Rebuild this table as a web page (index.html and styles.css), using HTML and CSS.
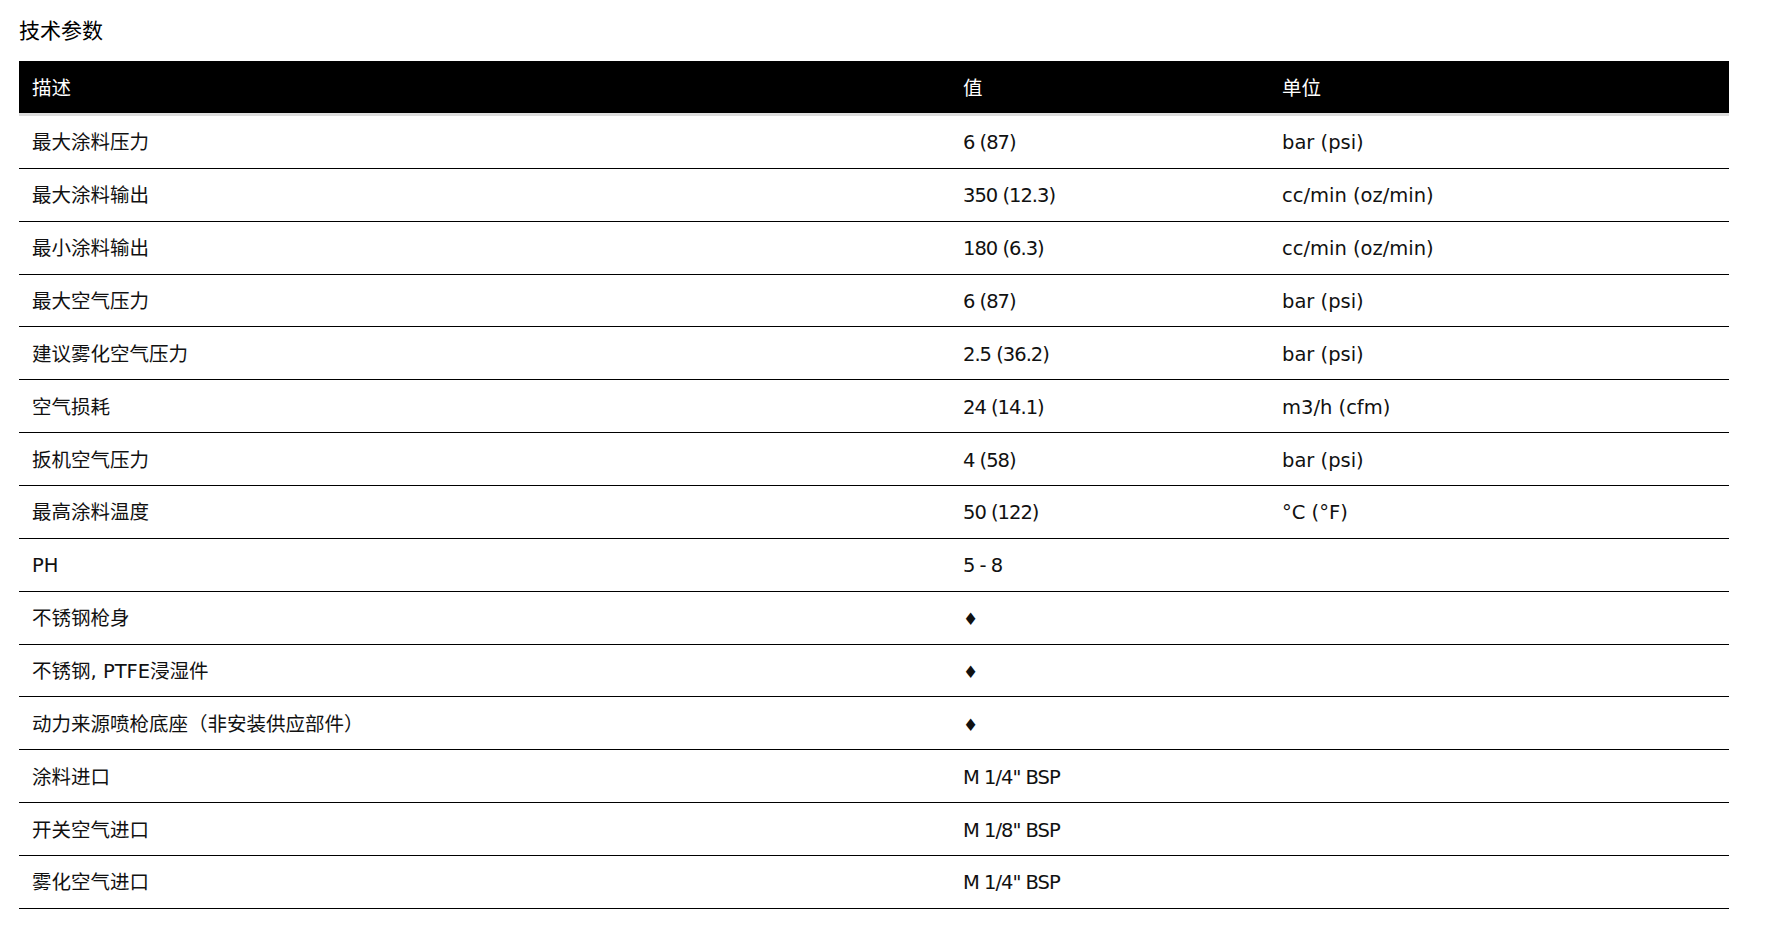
FILE: index.html
```html
<!DOCTYPE html>
<html lang="zh-CN">
<head>
<meta charset="utf-8">
<title>技术参数</title>
<link rel="stylesheet" href="styles.css">
</head>
<body>
<div class="page">
  <h2 class="title">技术参数</h2>
  <div class="spec">
    <div class="row head"><div class="cell">描述</div><div class="cell">值</div><div class="cell">单位</div></div>
    <div class="row"><div class="cell">最大涂料压力</div><div class="cell val">6 (87)</div><div class="cell">bar (psi)</div></div>
    <div class="row"><div class="cell">最大涂料输出</div><div class="cell val">350 (12.3)</div><div class="cell">cc/min (oz/min)</div></div>
    <div class="row"><div class="cell">最小涂料输出</div><div class="cell val">180 (6.3)</div><div class="cell">cc/min (oz/min)</div></div>
    <div class="row"><div class="cell">最大空气压力</div><div class="cell val">6 (87)</div><div class="cell">bar (psi)</div></div>
    <div class="row"><div class="cell">建议雾化空气压力</div><div class="cell val">2.5 (36.2)</div><div class="cell">bar (psi)</div></div>
    <div class="row"><div class="cell">空气损耗</div><div class="cell val">24 (14.1)</div><div class="cell">m3/h (cfm)</div></div>
    <div class="row"><div class="cell">扳机空气压力</div><div class="cell val">4 (58)</div><div class="cell">bar (psi)</div></div>
    <div class="row"><div class="cell">最高涂料温度</div><div class="cell val">50 (122)</div><div class="cell">°C (°F)</div></div>
    <div class="row"><div class="cell">PH</div><div class="cell val">5 - 8</div><div class="cell"></div></div>
    <div class="row"><div class="cell">不锈钢枪身</div><div class="cell val"><span class="dia">♦</span></div><div class="cell"></div></div>
    <div class="row"><div class="cell">不锈钢, PTFE浸湿件</div><div class="cell val"><span class="dia">♦</span></div><div class="cell"></div></div>
    <div class="row"><div class="cell">动力来源喷枪底座（非安装供应部件）</div><div class="cell val"><span class="dia">♦</span></div><div class="cell"></div></div>
    <div class="row"><div class="cell">涂料进口</div><div class="cell val">M 1/4" BSP</div><div class="cell"></div></div>
    <div class="row"><div class="cell">开关空气进口</div><div class="cell val">M 1/8" BSP</div><div class="cell"></div></div>
    <div class="row"><div class="cell">雾化空气进口</div><div class="cell val">M 1/4" BSP</div><div class="cell"></div></div>
  </div>
</div>
</body>
</html>
```
FILE: styles.css
```css
html, body {
  margin: 0;
  padding: 0;
  background: #fff;
}
body {
  font-family: "DejaVu Sans", "Noto Sans CJK SC", sans-serif;
  color: #000;
}
.page {
  padding: 19px 0 0 19px;
  width: 1710px;
}
.title {
  margin: 0 0 18px 0;
  font-size: 21px;
  line-height: 24px;
  font-weight: normal;
  height: 24px;
}
.spec {
  display: flex;
  flex-direction: column;
}
.row {
  display: grid;
  grid-template-columns: 931px 319px 460px;
  height: 51.86px;
  align-items: center;
  border-bottom: 1px solid #000;
  font-size: 19.5px;
  line-height: 24px;
  color: #111;
}
.row.head {
  height: 52px;
  background: #000;
  color: #fff;
  border-bottom: 3px solid #dcdcdc;
}
.cell {
  padding: 3px 13px 0;
  white-space: nowrap;
}
.val {
  letter-spacing: -1px;
}
.dia {
  font-size: 17px;
}
```
